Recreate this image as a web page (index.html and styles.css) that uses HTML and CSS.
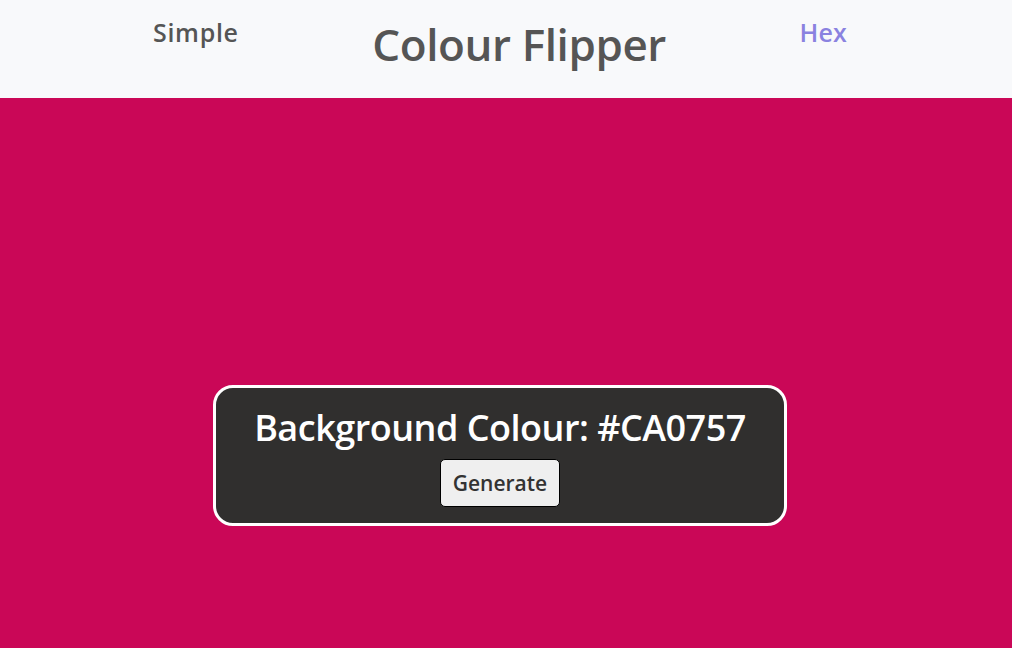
FILE: index.html
```html
<!DOCTYPE html>
<html lang="en">
<head>
<meta charset="utf-8">
<title>Colour Flipper</title>
<link rel="stylesheet" href="styles.css">
</head>
<body>
<header class="topbar">
  <a class="nav nav-simple" href="#">Simple</a>
  <h1 class="title">Colour Flipper</h1>
  <a class="nav nav-hex" href="#">Hex</a>
</header>
<main class="stage">
  <div class="panel">
    <h2 class="readout">Background Colour: <span class="code">#CA0757</span></h2>
    <button class="btn" type="button">Generate</button>
  </div>
</main>
</body>
</html>
```

FILE: styles.css
```css
* { box-sizing: border-box; }
html, body { margin: 0; height: 100%; }
body {
  font-family: "Open Sans", "Noto Sans", sans-serif;
  background: #ca0757;
  display: flex;
  flex-direction: column;
}
.topbar {
  height: 98px;
  background: #f8f9fb;
  display: flex;
  align-items: flex-start;
  justify-content: space-between;
  padding: 0 165px 0 153px;
  flex-shrink: 0;
}
.nav {
  text-decoration: none;
  font-size: 25px;
  font-weight: 600;
  margin-top: 15px;
  letter-spacing: 0.2px;
}
.nav-simple { color: #555555; letter-spacing: 0.7px; }
.nav-hex { color: #8a82e0; }
.title {
  margin: 14px 0 0 0;
  font-size: 44px;
  font-weight: 600;
  color: #555555;
  letter-spacing: -0.4px;
}
.stage {
  flex: 1;
  display: flex;
  justify-content: center;
  align-items: flex-start;
  padding-top: 287px;
  padding-right: 12px;
}
.panel {
  width: 574px;
  height: 141px;
  background: #302f2e;
  border: 3px solid #ffffff;
  border-radius: 20px;
  display: flex;
  flex-direction: column;
  align-items: center;
  padding-top: 16px;
}
.readout {
  margin: 0;
  color: #ffffff;
  font-size: 36px;
  font-weight: 600;
  line-height: 48px;
  letter-spacing: -0.5px;
}
.btn {
  margin-top: 7px;
  width: 120px;
  height: 48px;
  background: #efefef;
  border: 1px solid #000000;
  border-radius: 5px;
  font-family: inherit;
  font-size: 21px;
  font-weight: 600;
  color: #333333;
  padding: 0;
}
```
